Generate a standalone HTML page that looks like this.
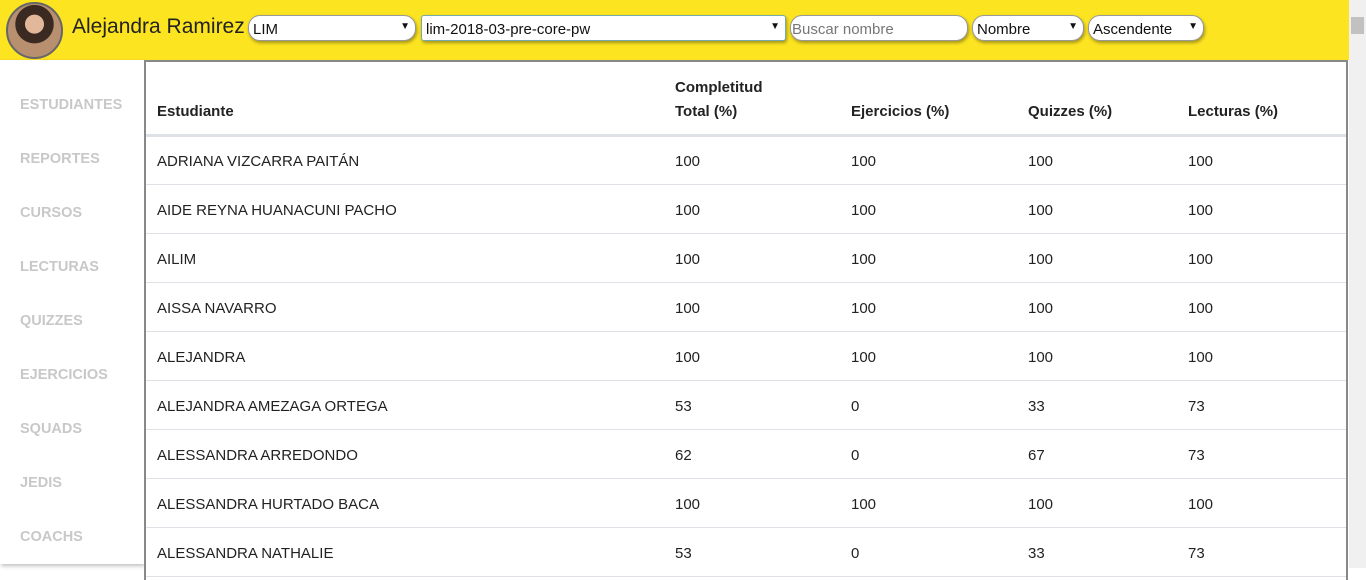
<!DOCTYPE html>
<html><head><style>
*{box-sizing:border-box;margin:0;padding:0}
body{width:1366px;height:568px;overflow:hidden;background:#fff;font-family:"Liberation Sans",sans-serif;position:relative}
.top{position:absolute;left:0;top:0;width:1349px;height:60px;background:#fde421}
.av{position:absolute;left:6px;top:2px;width:57px;height:57px;border-radius:50%;border:2px solid #666;background:radial-gradient(circle at 50% 38%,#e2b79a 0 22%,#3a2a22 23% 45%,#b89070 46%);}
.name{position:absolute;left:72px;top:15px;font-size:21px;color:#222}
.sel{position:absolute;top:15px;height:26px;background:#fff;border:1px solid #999;border-radius:12px;box-shadow:1px 2px 3px rgba(0,0,0,.35);font-size:15px;color:#111;padding:5px 0 0 4px}
.sel .ar{position:absolute;right:5px;top:5px;font-size:10px}
.side{position:absolute;left:0;top:60px;width:144px;height:504px;background:#fff;box-shadow:1px 2px 4px rgba(0,0,0,.25)}
.side div{position:absolute;left:20px;font-size:14.5px;font-weight:bold;color:#c8c8c8}
.main{position:absolute;left:144px;top:60px;width:1204px;height:520px;border:2px solid #888;border-bottom:none;background:#fff}
table{position:absolute;left:0;top:0;width:1200px;border-collapse:collapse;font-size:15px;color:#222}
th{text-align:left;font-weight:bold;height:73px;vertical-align:bottom;padding:0 0 10px 11px;border-bottom:3px solid #dee2e6;line-height:24px}
td{height:49px;padding:3px 0 0 11px;border-bottom:1px solid #dee2e6}
.sb{position:absolute;left:1349px;top:0;width:17px;height:568px;background:#f0f0f0}
.sb .th{position:absolute;left:2px;top:17px;width:13px;height:17px;background:#c1c1c1}
</style></head><body>
<div class="top">
<div class="av"></div>
<div class="name">Alejandra Ramirez</div>
<div class="sel" style="left:248px;width:168px">LIM<span class="ar">▼</span></div>
<div class="sel" style="left:421px;width:365px;border-radius:3px;border-color:#7aa">lim-2018-03-pre-core-pw<span class="ar">▼</span></div>
<div class="sel" style="left:790px;width:178px;color:#777;padding-left:1px">Buscar nombre</div>
<div class="sel" style="left:972px;width:112px">Nombre<span class="ar">▼</span></div>
<div class="sel" style="left:1088px;width:116px">Ascendente<span class="ar">▼</span></div>
</div>
<div class="side">
<div style="top:37px">ESTUDIANTES</div><div style="top:91px">REPORTES</div><div style="top:145px">CURSOS</div><div style="top:199px">LECTURAS</div><div style="top:253px">QUIZZES</div><div style="top:307px">EJERCICIOS</div><div style="top:361px">SQUADS</div><div style="top:415px">JEDIS</div><div style="top:469px">COACHS</div>
</div>
<div class="main"><table>
<tr><th style="width:518px">Estudiante</th><th style="width:176px">Completitud<br>Total (%)</th><th style="width:177px">Ejercicios (%)</th><th style="width:160px">Quizzes (%)</th><th>Lecturas (%)</th></tr>
<tr><td>ADRIANA VIZCARRA PAITÁN</td><td>100</td><td>100</td><td>100</td><td>100</td></tr>
<tr><td>AIDE REYNA HUANACUNI PACHO</td><td>100</td><td>100</td><td>100</td><td>100</td></tr>
<tr><td>AILIM</td><td>100</td><td>100</td><td>100</td><td>100</td></tr>
<tr><td>AISSA NAVARRO</td><td>100</td><td>100</td><td>100</td><td>100</td></tr>
<tr><td>ALEJANDRA</td><td>100</td><td>100</td><td>100</td><td>100</td></tr>
<tr><td>ALEJANDRA AMEZAGA ORTEGA</td><td>53</td><td>0</td><td>33</td><td>73</td></tr>
<tr><td>ALESSANDRA ARREDONDO</td><td>62</td><td>0</td><td>67</td><td>73</td></tr>
<tr><td>ALESSANDRA HURTADO BACA</td><td>100</td><td>100</td><td>100</td><td>100</td></tr>
<tr><td>ALESSANDRA NATHALIE</td><td>53</td><td>0</td><td>33</td><td>73</td></tr>
</table></div>
<div class="sb"><div class="th"></div></div>
</body></html>
